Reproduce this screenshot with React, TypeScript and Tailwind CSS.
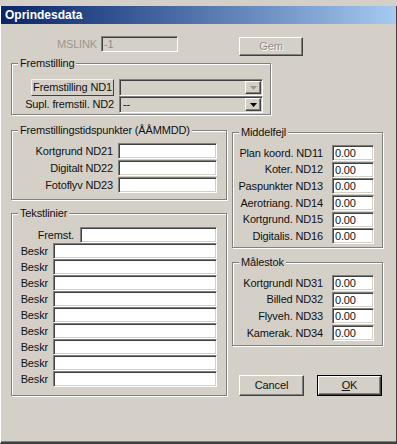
import React from 'react';

const sunken =
    'border border-t-[#808080] border-l-[#808080] border-b-white border-r-white shadow-[inset_1px_1px_0_#404040,inset_-1px_-1px_0_#D4D0C8]';
const raised =
    'border border-t-white border-l-white border-b-[#404040] border-r-[#404040] shadow-[inset_-1px_-1px_0_#808080,inset_1px_1px_0_#D4D0C8]';

const Field: React.FC<{ w: string; value?: string; disabled?: boolean }> = ({ w, value, disabled }) => (
    <div className={`${w} h-[16px] ${disabled ? 'bg-[#D4D0C8] text-[#8c8c8c]' : 'bg-white'} ${sunken} pl-[2px] leading-[14px] whitespace-nowrap overflow-hidden`}>
        {value}
    </div>
);

const Group: React.FC<{ title: string; className: string; children: React.ReactNode }> = ({ title, className, children }) => (
    <div className={`relative border border-[#808080] shadow-[1px_1px_0_#fff,inset_1px_1px_0_#fff] ${className}`}>
        <span className="absolute left-[6px] -top-[7px] px-[2px] bg-[#D4D0C8] leading-[12px] whitespace-nowrap">{title}</span>
        {children}
    </div>
);

const Arrow: React.FC<{ color: string }> = ({ color }) => (
    <svg width="7" height="4" viewBox="0 0 7 4">
        <polygon points="0,0 7,0 3.5,4" fill={color} />
    </svg>
);

const Combo: React.FC<{ value?: string; disabled?: boolean }> = ({ value, disabled }) => (
    <div className={`w-[144px] h-[17px] bg-[#D4D0C8] ${sunken} flex items-stretch`}>
        <div className="flex-1 pl-[3px] leading-[14px]">{value}</div>
        <div className={`w-[16px] my-[1px] mr-[1px] ${raised} flex items-center justify-center`}>
            <Arrow color={disabled ? '#9a968e' : '#000'} />
        </div>
    </div>
);

const LabeledRow: React.FC<{ label: string; w: string; gap: string; value?: string }> = ({ label, w, gap, value }) => (
    <div className={`flex justify-end items-center h-[16px] ${gap}`}>
        <span className="whitespace-nowrap">{label}</span>
        <Field w={w} value={value} />
    </div>
);

const middelfejl = ['Plan koord. ND11', 'Koter. ND12', 'Paspunkter ND13', 'Aerotriang. ND14', 'Kortgrund. ND15', 'Digitalis. ND16'];
const maalestok = ['Kortgrundl ND31', 'Billed ND32', 'Flyveh. ND33', 'Kamerak. ND34'];

export default function App() {
    return (
        <div className="w-[397px] h-[444px] bg-[#D4D0C8] overflow-hidden flex flex-col text-[#111] text-[11px] tracking-[-0.15px] font-['Liberation_Sans',Arial,sans-serif]">
            <div className="h-[6px] bg-[#D4D0C8]" />
            <div className="flex-1 flex flex-col border-l border-l-white border-r border-r-[#404040] border-b-2 border-b-[#404040] shadow-[inset_0_-1px_0_#808080]">
                {/* title bar */}
                <div className="h-[18px] bg-linear-to-r from-[#0A246A] to-[#A6CAF0] pl-[4px] text-white font-bold text-[12px] tracking-normal leading-[18px]">
                    Oprindesdata
                </div>

                <div className="pl-[10px]">
                    {/* MSLINK row */}
                    <div className="mt-[12px] flex items-start h-[20px]">
                        <span className="w-[86px] text-right leading-[16px] text-[#9a968e]">MSLINK</span>
                        <div className="ml-[4px]">
                            <Field w="w-[77px]" value="-1" disabled />
                        </div>
                        <button className={`ml-[61px] mt-[1px] w-[64px] h-[19px] ${raised} text-[#8c8c8c] [text-shadow:1px_1px_0_#fff] leading-[15px]`}>
                            Gem
                        </button>
                    </div>

                    {/* Fremstilling */}
                    <Group title="Fremstilling" className="mt-[7px] w-[260px] h-[52px] pt-[15px] pr-[7px]">
                        <div className="flex justify-end items-center h-[17px] gap-[5px]">
                            <span className="h-[17px] px-[1px] leading-[15px] border border-t-[#f4f2ee] border-l-[#f4f2ee] border-b-[#404040] border-r-[#404040] whitespace-nowrap">
                                Fremstilling ND1
                            </span>
                            <Combo disabled />
                        </div>
                        <div className="flex justify-end items-center h-[17px] gap-[5px]">
                            <span className="whitespace-nowrap">Supl. fremstil. ND2</span>
                            <Combo value="--" />
                        </div>
                    </Group>

                    <div className="flex items-start">
                        {/* left column */}
                        <div className="w-[216px] flex flex-col">
                            <Group title="Fremstillingstidspunkter (ÅÅMMDD)" className="mt-[15px] h-[70px] pt-[12px] pr-[9px] flex flex-col gap-px">
                                <LabeledRow label="Kortgrund ND21" w="w-[99px]" gap="gap-[5px]" />
                                <LabeledRow label="Digitalt ND22" w="w-[99px]" gap="gap-[5px]" />
                                <LabeledRow label="Fotoflyv ND23" w="w-[99px]" gap="gap-[5px]" />
                            </Group>

                            <Group title="Tekstlinier" className="mt-[13px] h-[183px] pt-[13px] pr-[9px] flex flex-col">
                                <LabeledRow label="Fremst." w="w-[137px]" gap="gap-[6px]" />
                                {Array.from({ length: 9 }).map((_, i) => (
                                    <LabeledRow key={i} label="Beskr" w="w-[164px]" gap="gap-[5px]" />
                                ))}
                            </Group>
                        </div>

                        {/* right column */}
                        <div className="ml-[5px] w-[151px] flex flex-col">
                            <Group title="Middelfejl" className="mt-[17px] h-[116px] pt-[12px] pr-[8px] flex flex-col gap-[0.67px]">
                                {middelfejl.map(l => (
                                    <LabeledRow key={l} label={l} w="w-[42px]" gap="gap-[9px]" value="0.00" />
                                ))}
                            </Group>

                            <Group title="Målestok" className="mt-[14px] h-[84px] pt-[12px] pr-[8px] flex flex-col gap-[0.67px]">
                                {maalestok.map(l => (
                                    <LabeledRow key={l} label={l} w="w-[42px]" gap="gap-[9px]" value="0.00" />
                                ))}
                            </Group>

                            <div className="mt-[29px] pl-[7px] flex gap-[13px]">
                                <button className={`w-[65px] h-[21px] ${raised} leading-[17px]`}>Cancel</button>
                                <div className="w-[65px] h-[21px] border border-black">
                                    <button className={`w-full h-full ${raised} leading-[15px]`}>
                                        <span className="underline">O</span>K
                                    </button>
                                </div>
                            </div>
                        </div>
                    </div>
                </div>
            </div>
        </div>
    );
}
